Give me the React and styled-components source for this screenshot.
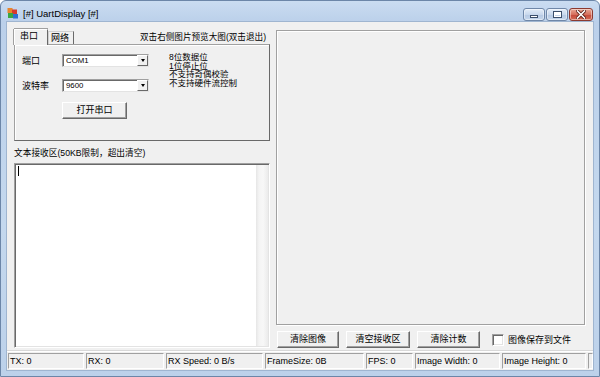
import React from 'react';
import styled, { createGlobalStyle } from 'styled-components';

const GlobalStyle = createGlobalStyle`
  html, body {
    margin: 0;
    padding: 0;
    background: #ffffff;
  }
  body {
    font-family: "Liberation Sans", "Noto Sans CJK SC", sans-serif;
    color: #000;
  }
  * { box-sizing: border-box; }
`;

const Frame = styled.div`
  width: 600px;
  height: 377px;
  display: flex;
  flex-direction: column;
  padding: 0 6px 6px 6px;
  border: 1px solid #6c86a8;
  border-radius: 6px 6px 0 0;
  background: linear-gradient(180deg, #cadcf1 0px, #bbd0ea 21px, #c4d8ee 60%, #bcd1ea 100%);
  overflow: hidden;
`;

const TitleBar = styled.div`
  height: 21px;
  margin: 0 -6px;
  padding: 6px 6px 0 6px;
  display: flex;
  align-items: flex-start;
  flex-shrink: 0;
`;

const AppIcon = styled.svg`
  width: 12px;
  height: 12px;
  flex-shrink: 0;
`;

const Title = styled.span`
  margin-left: 4px;
  font-size: 9.5px;
  line-height: 13px;
  color: #000;
`;

const Caption = styled.div`
  margin-left: auto;
  display: flex;
  gap: 1px;
  padding-top: 1px;
`;

const CapButton = styled.div`
  width: ${p => (p.$close ? 24 : 22)}px;
  height: 13px;
  border: 1px solid ${p => (p.$close ? '#8c3a30' : '#6f87a8')};
  border-radius: 3px;
  background: ${p =>
    p.$close
      ? 'linear-gradient(180deg, #e8a795 0%, #d6705d 50%, #c5483a 51%, #d46b55 100%)'
      : 'linear-gradient(180deg, #e4edf8 0%, #c8d8ed 50%, #b5c9e3 51%, #c5d6ec 100%)'};
  display: flex;
  align-items: center;
  justify-content: center;
  box-shadow: inset 0 0 0 1px rgba(255, 255, 255, 0.45);
`;

const MinGlyph = styled.div`
  width: 8px;
  height: 3px;
  margin-top: 4px;
  background: #fff;
  border: 1px solid #3b4f6b;
`;

const MaxGlyph = styled.div`
  width: 9px;
  height: 7px;
  border: 1px solid #3b4f6b;
  box-shadow: inset 0 0 0 1px #fff, inset 0 2px 0 1px #fff;
  background: #c7d7ec;
`;

const Client = styled.div`
  flex: 1;
  display: flex;
  flex-direction: column;
  background: #f0f0f0;
  box-shadow: 0 0 0 1px #9fb5d0;
`;

const Main = styled.div`
  height: 328px;
  display: flex;
  padding: 7px 8px 0 7px;
  gap: 6px;
`;

const LeftCol = styled.div`
  width: 256px;
  display: flex;
  flex-direction: column;
`;

const TabRow = styled.div`
  height: 15px;
  display: flex;
  align-items: flex-end;
  position: relative;
`;

const Tab = styled.div`
  height: ${p => (p.$active ? 16 : 13)}px;
  padding: 0 ${p => (p.$active ? 9 : 4)}px 0 ${p => (p.$active ? 5 : 2)}px;
  margin-bottom: ${p => (p.$active ? -1 : 0)}px;
  border: 1px solid #a0a0a0;
  border-bottom: none;
  border-right-color: #696969;
  border-left-color: ${p => (p.$active ? '#ffffff' : '#d0d0d0')};
  border-top-color: ${p => (p.$active ? '#ffffff' : '#d0d0d0')};
  box-shadow: ${p => (p.$active ? '-1px 0 0 #a0a0a0, 0 -1px 0 #a0a0a0' : 'none')};
  background: #f0f0f0;
  font-size: 9px;
  line-height: ${p => (p.$active ? 13 : 12)}px;
  position: relative;
  z-index: ${p => (p.$active ? 2 : 1)};
`;

const Hint = styled.span`
  margin-left: auto;
  margin-right: 4px;
  align-self: center;
  font-size: 8.6px;
  line-height: 12px;
  padding-top: 1px;
`;

const TabPanel = styled.div`
  height: 97px;
  border: 1px solid #a0a0a0;
  border-right-color: #696969;
  border-bottom-color: #696969;
  box-shadow: inset 1px 1px 0 #fff;
  display: flex;
  padding: 9px 0 0 7px;
`;

const FormGrid = styled.div`
  display: grid;
  grid-template-columns: 40px 87px;
  grid-template-rows: 13px 13px 17px;
  row-gap: 12px;
  align-items: center;
  align-content: start;
  & > :last-child {
    margin-top: -4px;
  }
`;

const Label = styled.span`
  font-size: 9px;
  line-height: 12px;
`;

const Combo = styled.div`
  height: 13px;
  background: #fff;
  border: 1px solid #a0a0a0;
  border-right-color: #e3e3e3;
  border-bottom-color: #e3e3e3;
  box-shadow: inset 1px 1px 0 #696969;
  display: flex;
  align-items: center;
  padding-left: 3px;
  font-size: 7.8px;
`;

const ComboText = styled.span`
  flex: 1;
  line-height: 10px;
`;

const DropBtn = styled.div`
  width: 11px;
  height: 11px;
  background: #f0f0f0;
  border: 1px solid #fff;
  border-right-color: #696969;
  border-bottom-color: #696969;
  display: flex;
  align-items: center;
  justify-content: center;
  &::after {
    content: '';
    border-left: 2.5px solid transparent;
    border-right: 2.5px solid transparent;
    border-top: 3px solid #000;
  }
`;

const Button = styled.div`
  width: ${p => p.$w}px;
  height: 17px;
  background: #f0f0f0;
  border: 1px solid #fff;
  border-right-color: #696969;
  border-bottom-color: #696969;
  box-shadow: inset -1px -1px 0 #a0a0a0;
  display: flex;
  align-items: center;
  justify-content: center;
  font-size: 9px;
  line-height: 12px;
  padding-bottom: 1px;
`;

const FormButton = styled(Button)`
  grid-column: 2;
  justify-self: start;
`;

const Info = styled.div`
  margin-left: 20px;
  margin-top: -1px;
  display: flex;
  flex-direction: column;
`;

const InfoLine = styled.div`
  height: 8.7px;
  font-size: 8.5px;
  line-height: 8.7px;
  white-space: nowrap;
`;

const RecvLabel = styled.div`
  height: 22px;
  font-size: 8.7px;
  line-height: 12px;
  padding-top: 6px;
`;

const TextBox = styled.div`
  height: 185px;
  background: #fff;
  border: 1px solid #a0a0a0;
  border-right-color: #fff;
  border-bottom-color: #fff;
  box-shadow: inset 1px 1px 0 #696969, inset -1px -1px 0 #e3e3e3;
  display: flex;
  padding: 1px 1px 1px 2px;
`;

const TextArea = styled.div`
  flex: 1;
  padding: 1px 0 0 1px;
`;

const Caret = styled.div`
  width: 1px;
  height: 10px;
  background: #000;
`;

const ScrollTrack = styled.div`
  width: 12px;
  background: linear-gradient(90deg, #e6e6e6 0%, #f4f4f4 25%, #f7f7f7 60%, #ebebeb 100%);
`;

const RightCol = styled.div`
  flex: 1;
  display: flex;
  flex-direction: column;
  padding-top: 1px;
`;

const Preview = styled.div`
  height: 295px;
  border: 1px solid #a0a0a0;
  box-shadow: inset 1px 1px 0 #fff, 1px 1px 0 #fff;
`;

const ButtonRow = styled.div`
  display: flex;
  align-items: center;
  gap: 7px;
  margin-top: 6px;
  padding-left: 1px;
`;

const CheckWrap = styled.div`
  display: flex;
  align-items: center;
  gap: 4px;
  margin-left: 5px;
  font-size: 9px;
  line-height: 12px;
`;

const CheckBox = styled.div`
  width: 12px;
  height: 12px;
  background: #fff;
  border: 1px solid #a0a0a0;
  border-right-color: #fff;
  border-bottom-color: #fff;
  box-shadow: inset 1px 1px 0 #696969, inset -1px -1px 0 #e3e3e3;
`;

const StatusBar = styled.div`
  height: 20px;
  display: flex;
  gap: 2px;
  padding: 2px 0 0 1px;
  border-top: 1px solid #d8d8d8;
  box-shadow: inset 0 1px 0 #fff;
`;

const StatusPanel = styled.div`
  width: ${p => p.$w}px;
  height: 16px;
  border: 1px solid #a0a0a0;
  border-right-color: #fff;
  border-bottom-color: #fff;
  font-size: 9px;
  line-height: 14px;
  padding-left: 1px;
  white-space: nowrap;
  overflow: hidden;
`;

const statusItems = [
  { text: 'TX: 0', w: 76 },
  { text: 'RX: 0', w: 78 },
  { text: 'RX Speed: 0 B/s', w: 97 },
  { text: 'FrameSize: 0B', w: 99 },
  { text: 'FPS: 0', w: 47 },
  { text: 'Image Width: 0', w: 85 },
  { text: 'Image Height: 0', w: 84 },
  { text: '', w: 5 },
];

const infoLines = ['8位数据位', '1位停止位', '不支持奇偶校验', '不支持硬件流控制'];

function App() {
  return (
    <>
      <GlobalStyle />
      <Frame>
        <TitleBar>
          <AppIcon viewBox="0 0 12 12">
            <rect x="0.5" y="1" width="5" height="5" fill="#e8862c" />
            <rect x="5" y="2.5" width="5" height="5" fill="#d63a2c" />
            <rect x="1" y="6" width="5" height="5" fill="#3aa640" />
            <rect x="6" y="7" width="5" height="4.5" fill="#2f6fd0" />
          </AppIcon>
          <Title>[#] UartDisplay [#]</Title>
          <Caption>
            <CapButton><MinGlyph /></CapButton>
            <CapButton><MaxGlyph /></CapButton>
            <CapButton $close>
              <svg width="10" height="9" viewBox="0 0 10 9">
                <path d="M1.5 1 L8.5 8 M8.5 1 L1.5 8" stroke="#5a1d16" strokeWidth="3.2" strokeLinecap="square" />
                <path d="M1.5 1 L8.5 8 M8.5 1 L1.5 8" stroke="#fff" strokeWidth="1.6" strokeLinecap="square" />
              </svg>
            </CapButton>
          </Caption>
        </TitleBar>
        <Client>
          <Main>
            <LeftCol>
              <TabRow>
                <Tab $active>串口</Tab>
                <Tab>网络</Tab>
                <Hint>双击右侧图片预览大图(双击退出)</Hint>
              </TabRow>
              <TabPanel>
                <FormGrid>
                  <Label>端口</Label>
                  <Combo><ComboText>COM1</ComboText><DropBtn /></Combo>
                  <Label>波特率</Label>
                  <Combo><ComboText>9600</ComboText><DropBtn /></Combo>
                  <FormButton $w={65}>打开串口</FormButton>
                </FormGrid>
                <Info>
                  {infoLines.map(l => <InfoLine key={l}>{l}</InfoLine>)}
                </Info>
              </TabPanel>
              <RecvLabel>文本接收区(50KB限制，超出清空)</RecvLabel>
              <TextBox>
                <TextArea><Caret /></TextArea>
                <ScrollTrack />
              </TextBox>
            </LeftCol>
            <RightCol>
              <Preview />
              <ButtonRow>
                <Button $w={62}>清除图像</Button>
                <Button $w={64}>清空接收区</Button>
                <Button $w={63}>清除计数</Button>
                <CheckWrap>
                  <CheckBox />
                  <span>图像保存到文件</span>
                </CheckWrap>
              </ButtonRow>
            </RightCol>
          </Main>
          <StatusBar>
            {statusItems.map((s, i) => (
              <StatusPanel key={i} $w={s.w}>{s.text}</StatusPanel>
            ))}
          </StatusBar>
        </Client>
      </Frame>
    </>
  );
}

export default App;
